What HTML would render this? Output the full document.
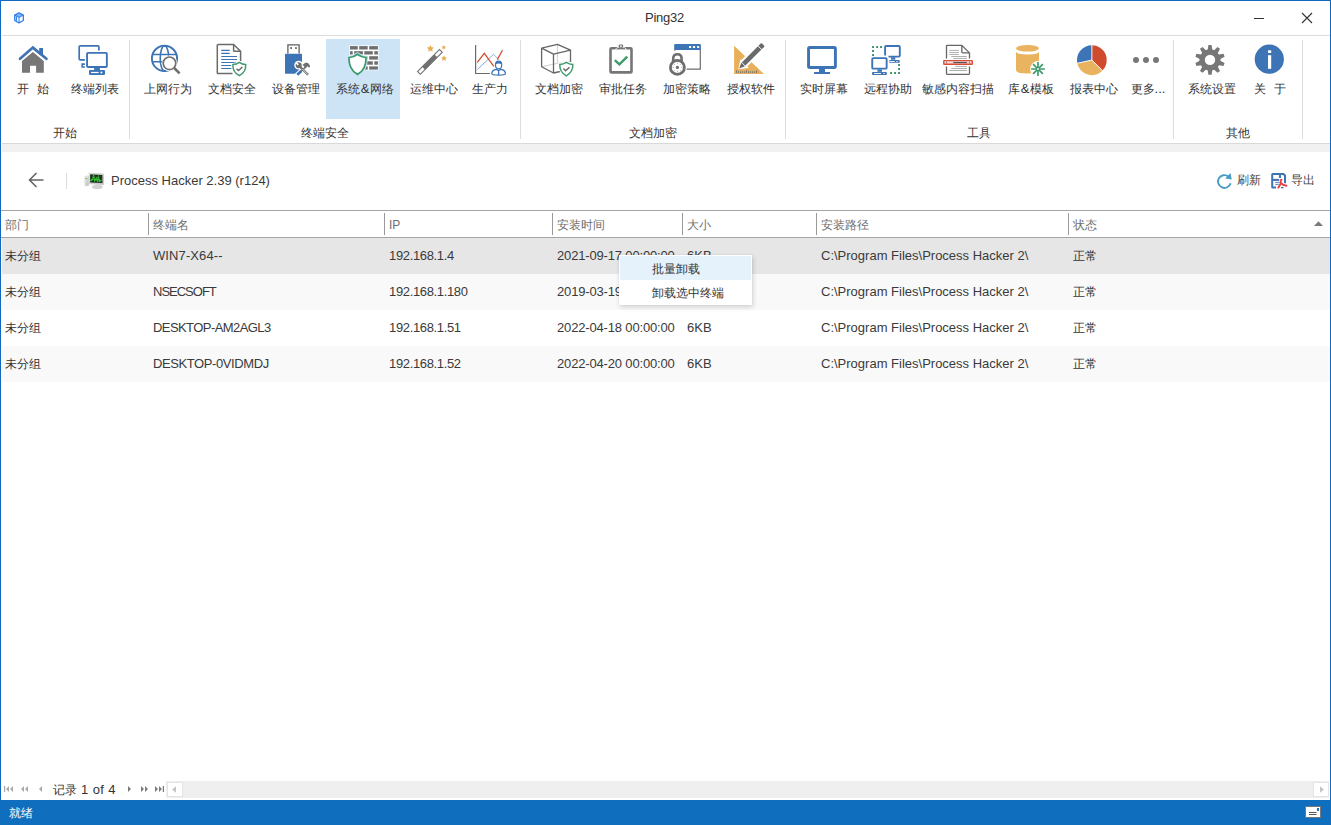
<!DOCTYPE html>
<html><head><meta charset="utf-8">
<style>
*{box-sizing:border-box}
html,body{margin:0;padding:0}
body{width:1331px;height:825px;overflow:hidden;position:relative;background:#fff;font-family:"Liberation Sans",sans-serif;color:#333}
.a{position:absolute}
.t{position:absolute;white-space:pre;line-height:20px;height:20px}
.c{font-size:12px}
.l{font-size:13px}
.bt{position:absolute;top:79px;font-size:12px;line-height:20px;white-space:pre;color:#333;transform:translateX(-50%)}
.gl{position:absolute;top:123px;font-size:12px;line-height:20px;white-space:pre;color:#333;transform:translateX(-50%)}
.vs{position:absolute;width:1px;background:#dedede}
.ic{position:absolute;top:40px;width:40px;height:40px}
.hd{position:absolute;top:215px;font-size:12px;line-height:20px;color:#6e6e6e;white-space:pre}
.hs{position:absolute;top:213px;width:1px;height:22px;background:#9a9a9a}
.row{position:absolute;left:2px;width:1328px;height:36px}
.cell{position:absolute;line-height:36px;height:36px;white-space:pre;color:#3a3a3a;font-size:13px}
.cell.c{font-size:12px;color:#333}
</style></head><body>

<!-- window border -->
<div class="a" style="left:0;top:0;width:1331px;height:1px;background:#1168c0"></div>
<div class="a" style="left:0;top:0;width:1px;height:825px;background:#1168c0"></div>
<div class="a" style="left:1330px;top:0;width:1px;height:825px;background:#1168c0"></div>

<!-- title bar -->
<svg class="a" style="left:11px;top:9px" width="16" height="18" viewBox="0 0 16 18">
 <path d="M8 3.8 L12.3 6.1 L8 8.4 L3.7 6.1 Z" fill="#7fb2f1"/>
 <path d="M8 8.4 V13.9 M3.7 6.1 L8 8.4 L12.3 6.1" fill="none" stroke="#3b86e8" stroke-width="1.1"/>
 <rect x="4.8" y="7.5" width="1.2" height="4.3" fill="#2f7be0"/>
 <path d="M8 3.8 L12.3 6.1 V11.5 L8 13.9 L3.7 11.5 V6.1 Z" fill="none" stroke="#2f80e8" stroke-width="1.3" stroke-linejoin="round"/>
</svg>
<div class="t l" style="left:645px;top:8px;color:#333;letter-spacing:-0.25px">Ping32</div>
<div class="a" style="left:1254px;top:18px;width:10px;height:1px;background:#333"></div>
<svg class="a" style="left:1300px;top:11px" width="14" height="14" viewBox="0 0 14 14">
 <path d="M2 2 L12 12 M12 2 L2 12" stroke="#333" stroke-width="1.1"/>
</svg>
<div class="a" style="left:2px;top:35px;width:1328px;height:1px;background:#dcdcdc"></div>

<!-- ribbon -->
<div class="a" style="left:326px;top:39px;width:74px;height:80px;background:#cde4f7"></div>
<div class="vs" style="left:129px;top:40px;height:99px"></div>
<div class="vs" style="left:520px;top:40px;height:99px"></div>
<div class="vs" style="left:785px;top:40px;height:99px"></div>
<div class="vs" style="left:1173px;top:40px;height:99px"></div>
<div class="vs" style="left:1302px;top:40px;height:99px"></div>

<!-- 1 home -->
<svg class="ic" style="left:14px" viewBox="0 0 40 40">
 <path d="M8 21.1 L18.9 11.9 L29.8 21.1 V32.7 H22.1 V25.7 H16 V32.7 H8 Z" fill="#777"/>
 <path d="M6 18.8 L18.9 7.6 L32.4 18.8" fill="none" stroke="#fff" stroke-width="4.4" stroke-linejoin="miter"/>
 <rect x="25.2" y="8" width="3.8" height="7" fill="#3d74b6"/>
 <path d="M6 18.8 L18.9 7.6 L32.4 18.8" fill="none" stroke="#3d74b6" stroke-width="2.7" stroke-linecap="round"/>
</svg>
<!-- 2 monitors -->
<svg class="ic" style="left:74px" viewBox="0 0 40 40" fill="none" stroke="#3d74b6">
 <path d="M24.9 10.4 V7 Q24.9 5.9 23.8 5.9 H6.3 Q5.2 5.9 5.2 7 V18.7 Q5.2 19.8 6.3 19.8 H10.9" stroke-width="1.7"/>
 <path d="M10.9 24.1 H8.2 V27 H10.9" stroke-width="1.6"/>
 <rect x="13.05" y="12.85" width="19.8" height="14.1" rx="1" stroke-width="1.9"/>
 <rect x="20.1" y="27.9" width="5.8" height="2.4" fill="#3d74b6" stroke="none"/>
 <rect x="15" y="30.1" width="16" height="4.8" rx="0.8" fill="#3d74b6" stroke="none"/>
 <rect x="17" y="31.9" width="7.6" height="1.2" fill="#fff" stroke="none"/>
 <circle cx="27.4" cy="32.5" r="1" fill="#fff" stroke="none"/>
</svg>
<!-- 3 globe -->
<svg class="ic" style="left:147px" viewBox="0 0 40 40" fill="none">
 <circle cx="17.5" cy="18.4" r="12.6" stroke="#3d74b6" stroke-width="1.9"/>
 <ellipse cx="17.5" cy="18.4" rx="4.3" ry="12.6" stroke="#3d74b6" stroke-width="1.6"/>
 <path d="M5.5 14.5 H29.5 M5.5 21.8 H29.5" stroke="#3d74b6" stroke-width="1.6"/>
 <circle cx="22.5" cy="23.3" r="7.9" fill="#fff"/>
 <circle cx="22.5" cy="23.3" r="6.3" fill="#fff" stroke="#707070" stroke-width="1.7"/>
 <path d="M27.2 28 L32.6 33.4" stroke="#707070" stroke-width="2.6"/>
</svg>
<!-- 4 doc shield -->
<svg class="ic" style="left:212px" viewBox="0 0 40 40" fill="none">
 <path d="M20.5 33.5 H6.1 Q5.3 33.5 5.3 32.7 V5.2 Q5.3 4.4 6.1 4.4 H21.6 L28.6 11.2 V21.5 M21.6 4.4 V10.4 Q21.6 11.2 22.4 11.2 H28.6" stroke="#6b6b6b" stroke-width="1.5"/>
 <path d="M9.2 10.4 H17.7 M9.2 13.4 H17.7 M9.2 16.5 H25 M9.2 19.5 H25 M9.2 22.5 H24 M9.2 25.5 H19.5 M9.2 28.5 H19.5" stroke="#3d74b6" stroke-width="1.1"/>
 <path d="M27.3 22.3 Q24.5 24.3 20.9 24.6 Q20.4 32 27.3 35.7 Q34.2 32 33.7 24.6 Q30.1 24.3 27.3 22.3 Z" fill="#fff" stroke="#fff" stroke-width="3"/>
 <path d="M27.3 22.3 Q24.5 24.3 20.9 24.6 Q20.4 32 27.3 35.7 Q34.2 32 33.7 24.6 Q30.1 24.3 27.3 22.3 Z" fill="#fff" stroke="#3e9b6c" stroke-width="1.5"/>
 <path d="M24.5 28.7 L26.5 30.6 L30.4 27" stroke="#666" stroke-width="1.4"/>
</svg>
<!-- 5 usb tools -->
<svg class="ic" style="left:277px" viewBox="0 0 40 40">
 <path d="M10.9 13.5 V4.8 H22.1 V13.5" fill="#fff" stroke="#606060" stroke-width="1.3"/>
 <rect x="13.3" y="7.2" width="1.7" height="1.7" fill="#555"/>
 <rect x="18.1" y="7.2" width="1.7" height="1.7" fill="#555"/>
 <rect x="8" y="13.8" width="17" height="19.9" rx="0.6" fill="#3d74b6"/>
 <g stroke="#fff" stroke-width="4.6" fill="none" stroke-linecap="round"><path d="M22.5 26.2 L31 34.8 M29.5 26.3 L20.2 34.8"/></g>
 <circle cx="21.7" cy="25.2" r="4.4" fill="#fff"/>
 <path d="M25.3 24.6 L28.8 22.3 L31.5 23.3 L33.4 26 L32.3 27.9 L30.5 26.5 L28.2 28.2 Z" fill="#fff" stroke="#fff" stroke-width="2"/>
 <path d="M24.3 31 L20.3 34.8" stroke="#3d74b6" stroke-width="2.6" fill="none"/>
 <path d="M29.3 26.5 L24 31.3" stroke="#6e6e6e" stroke-width="1.6" fill="none"/>
 <path d="M25.6 24.8 L28.8 22.5 L31.3 23.3 L33.2 26 L32.2 27.7 L30.5 26.3 L28.3 28 Z" fill="#6e6e6e"/>
 <circle cx="21.7" cy="25.3" r="3" fill="#6e6e6e"/>
 <path d="M21.3 24.8 L19 22.5" stroke="#fff" stroke-width="1.7"/>
 <path d="M22.5 26.2 L31 34.8" stroke="#6e6e6e" stroke-width="2.3"/>
 <path d="M25.2 28.9 L30.4 34.2" stroke="#fff" stroke-width="0.7"/>
</svg>
<!-- 6 firewall -->
<svg class="ic" style="left:343px" viewBox="0 0 40 40">
 <rect x="6.4" y="5.4" width="29.1" height="24.8" fill="#fff"/>
 <g fill="#6f6f6f">
  <rect x="7" y="6.1" width="7.8" height="3.4"/><rect x="16.2" y="6.1" width="8.5" height="3.4"/><rect x="26.2" y="6.1" width="8.7" height="3.4"/>
  <rect x="7" y="11.2" width="2.7" height="3.3"/><rect x="11.2" y="11.2" width="8.7" height="3.3"/><rect x="21.3" y="11.2" width="8.5" height="3.3"/><rect x="31.3" y="11.2" width="3.6" height="3.3"/>
  <rect x="16.2" y="16.2" width="8.5" height="3.4"/><rect x="26.2" y="16.2" width="8.7" height="3.4"/>
  <rect x="21.3" y="21.3" width="8.5" height="3.4"/><rect x="31.3" y="21.3" width="3.6" height="3.4"/>
  <rect x="16.2" y="26.4" width="8.5" height="3.2"/><rect x="26.2" y="26.4" width="8.7" height="3.2"/>
 </g>
 <path d="M14.5 14.2 Q10.8 17.2 6 17.6 Q5.6 29.5 14.5 34.4 Q23.4 29.5 23 17.6 Q18.2 17.2 14.5 14.2 Z" fill="#fff" stroke="#cde4f7" stroke-width="3.6"/>
 <path d="M14.5 14.2 Q10.8 17.2 6 17.6 Q5.6 29.5 14.5 34.4 Q23.4 29.5 23 17.6 Q18.2 17.2 14.5 14.2 Z" fill="#fff" stroke="#3e9b6c" stroke-width="1.8"/>
</svg>
<!-- 7 wand -->
<svg class="ic" style="left:412px" viewBox="0 0 40 40">
 <g transform="translate(6.6,33.2) rotate(-45)">
  <rect x="0.5" y="-2" width="31" height="4" fill="#fff" stroke="#707070" stroke-width="1.1"/>
  <rect x="7" y="-2" width="17.5" height="4" fill="#707070"/>
 </g>
 <path fill="#e8ad52" d="M18.4 4.9 L19.5 7.3 L22 7.5 L20.1 9.2 L20.7 11.8 L18.4 10.5 L16.1 11.8 L16.7 9.2 L14.8 7.5 L17.3 7.3 Z"/>
 <path fill="#e8ad52" d="M31.8 5 L32.5 6.5 L34.1 6.6 L32.9 7.7 L33.2 9.3 L31.8 8.5 L30.4 9.3 L30.7 7.7 L29.5 6.6 L31.1 6.5 Z"/>
 <path fill="#e8ad52" d="M32 15.2 L32.9 17.2 L35 17.4 L33.4 18.8 L33.9 20.9 L32 19.8 L30.1 20.9 L30.6 18.8 L29 17.4 L31.1 17.2 Z"/>
</svg>
<!-- 8 chart person -->
<svg class="ic" style="left:470px" viewBox="0 0 40 40" fill="none">
 <path d="M5.6 5.1 V33.5 H19.9" stroke="#6a6a6a" stroke-width="1.2"/>
 <path d="M7.3 29.6 L23.5 14.3 L28.6 19.4" stroke="#86aee0" stroke-width="1"/>
 <path d="M7.3 22.3 L14.3 13.3 L23.8 26.4 M27.2 19.6 L32.5 10.2" stroke="#d35130" stroke-width="1.3"/>
 <ellipse cx="28.6" cy="25" rx="4.4" ry="5" fill="#fff"/>
 <path d="M20.5 35.5 Q20.5 30 27 29.3 H30.2 Q36.7 30 36.7 35.5 Z" fill="#fff"/>
 <ellipse cx="28.6" cy="25" rx="3.1" ry="3.8" stroke="#3d74b6" stroke-width="1.2" fill="#fff"/>
 <path d="M25.5 24.3 Q25.5 21.2 28.6 21.2 Q31.7 21.2 31.7 24.3 Q28.6 22.8 25.5 24.3 Z" fill="#3d74b6"/>
 <path d="M21.8 33.6 Q21.8 29.9 26.4 29.3 L28.6 30.8 L30.8 29.3 Q35.4 29.9 35.4 33.6 Q35.4 35.2 28.6 35.2 Q21.8 35.2 21.8 33.6 Z M28.6 30.8 V35.2" stroke="#3d74b6" stroke-width="1.3"/>
</svg>
<!-- 9 cube shield -->
<svg class="ic" style="left:537px" viewBox="0 0 40 40" fill="none">
 <path d="M20.4 4.4 V23.3 L4.6 26.7 M20.4 23.3 L33.5 21.8" stroke="#d0d0d0" stroke-width="1"/>
 <path d="M4.6 8.2 L20.4 4.4 L33.5 10.2 L16.5 14.1 Z M4.6 8.2 V26.7 L16.5 33 V14.1 M33.5 10.2 V22 M16.5 33 L23 31.5" stroke="#666" stroke-width="1.3" stroke-linejoin="round"/>
 <path d="M29.3 22.3 Q26.5 24.2 22.8 24.4 Q22.4 32.2 29.3 35.8 Q36.2 32.2 35.8 24.4 Q32.1 24.2 29.3 22.3 Z" fill="#fff" stroke="#fff" stroke-width="3"/>
 <path d="M29.3 22.3 Q26.5 24.2 22.8 24.4 Q22.4 32.2 29.3 35.8 Q36.2 32.2 35.8 24.4 Q32.1 24.2 29.3 22.3 Z" fill="#fff" stroke="#3e9b6c" stroke-width="1.5"/>
 <path d="M26.4 28.6 L28.6 30.7 L32.5 27.2" stroke="#666" stroke-width="1.4"/>
</svg>
<!-- 10 clipboard -->
<svg class="ic" style="left:601px" viewBox="0 0 40 40" fill="none">
 <rect x="9.5" y="8.2" width="21" height="24.2" rx="1" stroke="#767676" stroke-width="2.6"/>
 <path d="M14 9.8 L16.5 7.3 H23.3 L25.8 9.8 Z" fill="#767676" stroke="#fff" stroke-width="0.8"/>
 <rect x="17.7" y="4.4" width="4.4" height="3.4" rx="1.2" fill="#767676"/>
 <rect x="19" y="5.5" width="1.8" height="1.3" fill="#fff"/>
 <path d="M13.8 20.1 L18.4 24.3 L26.3 16.7" stroke="#3e9b6c" stroke-width="2.5"/>
</svg>
<!-- 11 lock window -->
<svg class="ic" style="left:665px" viewBox="0 0 40 40">
 <path d="M9.8 9.5 V29.1 H35.3 V9.5" fill="#fff" stroke="#6e6e6e" stroke-width="1.2"/>
 <path d="M9.2 10 V5.3 Q9.2 4.1 10.4 4.1 H34.7 Q35.9 4.1 35.9 5.3 V10 Z" fill="#3d74b6"/>
 <rect x="24" y="6.1" width="2.2" height="1.9" fill="#fff"/><rect x="27.9" y="6.1" width="2.2" height="1.9" fill="#fff"/><rect x="32" y="6.1" width="2.2" height="1.9" fill="#fff"/>
 <circle cx="12.4" cy="27.4" r="9.6" fill="#fff"/>
 <path d="M6.3 21 V18.8 Q6.3 12.2 12.4 12.2 Q18.5 12.2 18.5 18.8 V21" fill="#fff" stroke="#fff" stroke-width="4"/>
 <path d="M8.2 21 V18.8 Q8.2 14.2 12.4 14.2 Q16.6 14.2 16.6 18.8 V21" fill="none" stroke="#6e6e6e" stroke-width="2.6"/>
 <circle cx="12.4" cy="27.4" r="7" fill="#fff" stroke="#6e6e6e" stroke-width="2.8"/>
 <circle cx="12.4" cy="27.4" r="1.6" fill="#6e6e6e"/>
 <path d="M12.4 22.5 V23.8 M12.4 31 V32.3 M7.5 27.4 H8.8 M16 27.4 H17.3 M9 24 L9.8 24.8 M15 30 L15.8 30.8 M15.8 24 L15 24.8 M9.8 30 L9 30.8" stroke="#999" stroke-width="0.8"/>
</svg>
<!-- 12 triangle pencil -->
<svg class="ic" style="left:729px" viewBox="0 0 40 40">
 <path d="M5.1 5.8 V34 H35 Z M11.4 19.2 L10 29 L19.9 27.9 Z" fill="#e9b05c" fill-rule="evenodd"/>
 <g fill="#6e6e6e"><rect x="7.2" y="30.1" width="0.9" height="2.9"/><rect x="9.2" y="31.2" width="0.9" height="1.8"/><rect x="11.2" y="31.2" width="0.9" height="1.8"/><rect x="13.2" y="31.2" width="0.9" height="1.8"/><rect x="15.2" y="31.2" width="0.9" height="1.8"/><rect x="17.2" y="30.1" width="0.9" height="2.9"/><rect x="19.2" y="31.2" width="0.9" height="1.8"/><rect x="21.2" y="31.2" width="0.9" height="1.8"/><rect x="23.2" y="31.2" width="0.9" height="1.8"/><rect x="25.2" y="31.2" width="0.9" height="1.8"/><rect x="27.2" y="30.1" width="0.9" height="2.9"/></g>
 <g transform="translate(10,28.6) rotate(-45)">
  <path d="M-1 0 L6 -4.4 H34.5 Q36 -4.4 36 -2.9 V2.9 Q36 4.4 34.5 4.4 H6 Z" fill="#fff"/>
  <path d="M0.3 0 L5.3 -2.4 H33 Q34 -2.4 34 -1.4 V1.4 Q34 2.4 33 2.4 H5.3 Z" fill="#6a6a6a"/>
  <path d="M6.2 -2.6 V2.6 M29.5 -2.6 V2.6" stroke="#fff" stroke-width="0.9"/>
 </g>
</svg>
<!-- 13 monitor -->
<svg class="ic" style="left:802px" viewBox="0 0 40 40">
 <rect x="6.55" y="7.5" width="26.85" height="20.05" rx="1.2" fill="none" stroke="#3d74b6" stroke-width="2.9"/>
 <rect x="17" y="28.5" width="6" height="3.8" fill="#3d74b6"/>
 <rect x="12.1" y="32" width="15.9" height="2" fill="#3d74b6"/>
</svg>
<!-- 14 remote -->
<svg class="ic" style="left:866px" viewBox="0 0 40 40">
 <g fill="#2f8f5e">
  <rect x="6.1" y="6.1" width="1.9" height="1.9"/><rect x="10.2" y="6.1" width="1.9" height="1.9"/><rect x="14.1" y="6.1" width="1.9" height="1.9"/>
  <rect x="6.1" y="10" width="1.9" height="1.9"/><rect x="6.1" y="14.1" width="1.9" height="1.9"/>
  <rect x="24.1" y="32.1" width="1.9" height="1.9"/><rect x="28.1" y="32.1" width="1.9" height="1.9"/><rect x="32.1" y="32.1" width="1.9" height="1.9"/>
  <rect x="32.1" y="24.1" width="1.9" height="1.9"/><rect x="32.1" y="28.1" width="1.9" height="1.9"/>
 </g>
 <g fill="none" stroke="#3d74b6">
  <path d="M19.1 15.5 V7 Q19.1 6 20.1 6 H32.8 Q33.8 6 33.8 7 V15.6 Q33.8 16.6 32.8 16.6 H22.5" stroke-width="1.9"/>
  <rect x="6.25" y="18.15" width="14.4" height="10.5" rx="1" stroke-width="1.9"/>
 </g>
 <g fill="#3d74b6">
  <rect x="25" y="17.3" width="4.3" height="2.4"/>
  <rect x="23.3" y="20.1" width="10.4" height="2.7" rx="0.6"/>
  <rect x="11.4" y="29.4" width="4.6" height="2.4"/>
  <rect x="6.1" y="32" width="14.7" height="2.9" rx="0.6"/>
 </g>
 <rect x="23.5" y="21" width="5.2" height="0.9" fill="#fff"/><circle cx="31" cy="21.4" r="0.7" fill="#fff"/>
 <rect x="8" y="33" width="7" height="0.9" fill="#fff"/><circle cx="18" cy="33.4" r="0.7" fill="#fff"/>
</svg>
<!-- 15 scan doc -->
<svg class="ic" style="left:938px" viewBox="0 0 40 40" fill="none">
 <path d="M8.5 18.4 V6.1 Q8.5 5.3 9.3 5.3 H23.8 L31.5 12.9 V18.4 M23.8 5.3 V12.1 Q23.8 12.9 24.6 12.9 H31.5 M8.5 26.4 V33.6 Q8.5 34.4 9.3 34.4 H30.7 Q31.5 34.4 31.5 33.6 V26.4" stroke="#666" stroke-width="1.3"/>
 <path d="M11.2 10.4 H20.9 M11.2 12.5 H20.9 M11.2 14.5 H20.9 M13.3 16.5 H28.9 M15.3 18.4 H28.9 M17.2 26.4 H28.9 M13.3 28.5 H28.9 M11.2 30.5 H28.9" stroke="#b0b0b0" stroke-width="1"/>
 <rect x="5.8" y="20.6" width="28.5" height="3.7" rx="0.4" fill="#fbd9de" stroke="#d64e35" stroke-width="1.4"/>
 <path d="M15.3 22.5 H28.9" stroke="#555" stroke-width="1.2"/>
 <path d="M8.5 21.7 V23.3 M31.5 21.7 V23.3" stroke="#777" stroke-width="1"/>
</svg>
<!-- 16 database -->
<svg class="ic" style="left:1010px" viewBox="0 0 40 40">
 <path d="M6 11.2 V30 Q6 33.5 17.5 33.5 Q29 33.5 29 30 V11.2 Q29 14.5 17.5 14.5 Q6 14.5 6 11.2 Z" fill="#e9b35f"/>
 <ellipse cx="17.5" cy="8.3" rx="11.5" ry="3.3" fill="#e9b35f"/>
 <circle cx="28" cy="29" r="7.9" fill="#fff"/>
 <path d="M28 22.1 V35.9 M21.1 29 H34.9 M23.1 24.1 L32.9 33.9 M32.9 24.1 L23.1 33.9" stroke="#3f9b6c" stroke-width="1.7"/>
 <circle cx="28" cy="29" r="1.9" fill="#3f9b6c"/><circle cx="28" cy="29" r="0.9" fill="#fff"/>
</svg>
<!-- 17 pie -->
<svg class="ic" style="left:1072px" viewBox="0 0 40 40">
 <path d="M19.9 20.1 V5.2 A14.9 14.9 0 0 1 30.5 30.6 Z" fill="#d04b2e"/>
 <path d="M19.9 20.1 L30.5 30.6 A14.9 14.9 0 0 1 5.3 23.3 Z" fill="#e9b25f"/>
 <path d="M19.9 20.1 L5.3 23.3 A14.9 14.9 0 0 1 19.9 5.2 Z" fill="#3d74b6"/>
 <path d="M19.9 20.1 V4.5 M19.9 20.1 L31 31.2 M19.9 20.1 L4.6 23.4" stroke="#fff" stroke-width="0.9"/>
</svg>
<!-- 18 dots -->
<svg class="ic" style="left:1126px" viewBox="0 0 40 40">
 <circle cx="10" cy="20" r="3" fill="#777"/><circle cx="20" cy="20" r="3" fill="#777"/><circle cx="30" cy="20" r="3" fill="#777"/>
</svg>
<!-- 19 gear -->
<svg class="ic" style="left:1190px" viewBox="0 0 40 40">
 <g transform="translate(20,19.9)" fill="#777">
  <circle r="10.6"/>
  <g id="tooth"><path d="M-1.6 -14.8 H1.6 L2.5 -9 H-2.5 Z"/></g>
  <use href="#tooth" transform="rotate(36)"/><use href="#tooth" transform="rotate(72)"/><use href="#tooth" transform="rotate(108)"/><use href="#tooth" transform="rotate(144)"/><use href="#tooth" transform="rotate(180)"/><use href="#tooth" transform="rotate(216)"/><use href="#tooth" transform="rotate(252)"/><use href="#tooth" transform="rotate(288)"/><use href="#tooth" transform="rotate(324)"/>
  <circle r="5.2" fill="#fff"/>
 </g>
</svg>
<!-- 20 info -->
<svg class="ic" style="left:1249px" viewBox="0 0 40 40">
 <circle cx="20.3" cy="19.2" r="14.6" fill="#3d74b6"/>
 <rect x="19" y="10.3" width="3.2" height="2.7" fill="#fff"/>
 <rect x="19" y="15.2" width="3.2" height="13.6" fill="#fff"/>
</svg>


<div class="bt" style="left:33px">开<span style="display:inline-block;width:8px"></span>始</div>
<div class="bt" style="left:94.5px">终端列表</div>
<div class="bt" style="left:167.5px">上网行为</div>
<div class="bt" style="left:232px">文档安全</div>
<div class="bt" style="left:296px">设备管理</div>
<div class="bt" style="left:365px">系统<span class="l" style="margin:0 1px">&amp;</span>网络</div>
<div class="bt" style="left:434px">运维中心</div>
<div class="bt" style="left:489.5px">生产力</div>
<div class="bt" style="left:559px">文档加密</div>
<div class="bt" style="left:623px">审批任务</div>
<div class="bt" style="left:687px">加密策略</div>
<div class="bt" style="left:751px">授权软件</div>
<div class="bt" style="left:824px">实时屏幕</div>
<div class="bt" style="left:888px">远程协助</div>
<div class="bt" style="left:958px">敏感内容扫描</div>
<div class="bt" style="left:1031px">库<span class="l" style="margin:0 1px">&amp;</span>模板</div>
<div class="bt" style="left:1094px">报表中心</div>
<div class="bt" style="left:1148px">更多<span class="l">...</span></div>
<div class="bt" style="left:1212px">系统设置</div>
<div class="bt" style="left:1270px">关<span style="display:inline-block;width:8px"></span>于</div>

<div class="gl" style="left:65px">开始</div>
<div class="gl" style="left:325px">终端安全</div>
<div class="gl" style="left:653px">文档加密</div>
<div class="gl" style="left:979px">工具</div>
<div class="gl" style="left:1238px">其他</div>

<div class="a" style="left:2px;top:143px;width:1328px;height:1px;background:#d9d9d9"></div>
<div class="a" style="left:2px;top:144px;width:1328px;height:8px;background:#f1f1f1"></div>

<!-- toolbar -->
<svg class="a" style="left:26px;top:170px" width="20" height="20" viewBox="0 0 20 20">
 <path d="M3.5 10 H17.5 M10.5 3 L3.5 10 L10.5 17" fill="none" stroke="#666" stroke-width="1.6"/>
</svg>
<div class="a" style="left:66px;top:173px;width:1px;height:16px;background:#dcdcdc"></div>
<svg class="a" style="left:82px;top:168px" width="24" height="24" viewBox="0 0 24 24">
 <defs><linearGradient id="gb" x1="0" y1="0" x2="1" y2="1"><stop offset="0" stop-color="#f6f6f6"/><stop offset="1" stop-color="#b9b9b9"/></linearGradient></defs>
 <path d="M2.9 8.4 L5.6 7.9 L6.6 8.2 V17.7 L2.9 17.6 Z" fill="url(#gb)" stroke="#c8c8c8" stroke-width="0.5"/>
 <rect x="3.2" y="10" width="2.2" height="1.1" fill="#6fd43c"/>
 <ellipse cx="15.3" cy="18.9" rx="5.4" ry="2.3" fill="#d2d2d2"/>
 <path d="M7.1 5 L21.6 6 V16.5 L7.3 15.8 Z" fill="url(#gb)" stroke="#bdbdbd" stroke-width="0.6"/>
 <path d="M8.1 6.2 L20.4 7 V15 L8.2 14.4 Z" fill="#222a22"/>
 <path d="M8.5 12.6 L10.6 11.4 L11.6 7.8 L12.8 12.4 L14.3 10.2 L15.3 12.6 L16.4 9.2 L17.5 13.4 L19.6 12" fill="none" stroke="#2bcf2b" stroke-width="1.5"/>
 <path d="M8.4 8.5 H20 M8.4 10.6 H20" stroke="#3a443a" stroke-width="0.5"/>
</svg>
<div class="t l" style="left:111px;top:171px;color:#3a3a3a">Process Hacker 2.39 (r124)</div>

<svg class="a" style="left:1214px;top:170px" width="22" height="22" viewBox="0 0 22 22">
 <path d="M16.6 13.2 A6.4 6.4 0 1 1 14.3 6.4" fill="none" stroke="#4a9bc4" stroke-width="1.9"/>
 <path d="M16.5 3.1 L17.7 9.5 L11.2 8.5 Z" fill="#4a9bc4"/>
</svg>
<svg class="a" style="left:1268px;top:170px" width="22" height="22" viewBox="0 0 22 22">
 <path d="M8 17.6 H4.8 Q4.2 17.6 4.2 17 V4.5 Q4.2 3.9 4.8 3.9 H15.4 L17 5.4 V13.2" fill="none" stroke="#3d74b6" stroke-width="2"/>
 <path d="M13 17.6 H15.5" stroke="#3d74b6" stroke-width="1.4"/>
 <path d="M5 9.9 H11.2" stroke="#3d74b6" stroke-width="2"/>
 <rect x="10.9" y="5.1" width="2.2" height="2.8" fill="#3d74b6"/>
 <path d="M7.3 12.4 H11.7 M7.3 14.4 H10.7" stroke="#3d74b6" stroke-width="0.9"/>
 <path d="M13.6 9.6 Q12.4 9.6 12.8 11.4 Q13.3 13 11.8 15.2 L10.4 17.6 M13.3 13.2 Q14.6 15.2 18.4 15.8" fill="none" stroke="#e8403f" stroke-width="1.9" stroke-linecap="round"/>
</svg>
<div class="t c" style="left:1237px;top:170px;color:#444">刷新</div>
<div class="t c" style="left:1291px;top:170px;color:#444">导出</div>

<!-- grid -->
<div class="a" style="left:1px;top:210px;width:1329px;height:1px;background:#a5a5a5"></div>
<div class="a" style="left:1px;top:237px;width:1329px;height:1px;background:#a5a5a5"></div>
<div class="hd" style="left:5px">部门</div>
<div class="hs" style="left:148px"></div><div class="hd" style="left:153px">终端名</div>
<div class="hs" style="left:384px"></div><div class="hd l" style="left:389px">IP</div>
<div class="hs" style="left:552px"></div><div class="hd" style="left:557px">安装时间</div>
<div class="hs" style="left:682px"></div><div class="hd" style="left:687px">大小</div>
<div class="hs" style="left:816px"></div><div class="hd" style="left:821px">安装路径</div>
<div class="hs" style="left:1068px"></div><div class="hd" style="left:1073px">状态</div>
<svg class="a" style="left:1313px;top:220px" width="11" height="7" viewBox="0 0 11 7"><path d="M1 6 L5.5 1.2 L10 6 Z" fill="#7a7a7a"/></svg>

<div class="row" style="top:238px;background:#e6e6e6"></div>
<div class="cell c" style="left:5px;top:238px">未分组</div>
<div class="cell" style="left:153px;top:238px;letter-spacing:0.1px">WIN7-X64--</div>
<div class="cell" style="left:389px;top:238px;letter-spacing:-0.35px">192.168.1.4</div>
<div class="cell" style="left:557px;top:238px;letter-spacing:-0.16px">2021-09-17 00:00:00</div>
<div class="cell" style="left:687px;top:238px">6KB</div>
<div class="cell" style="left:821px;top:238px">C:\Program Files\Process Hacker 2\</div>
<div class="cell c" style="left:1073px;top:238px">正常</div>
<div class="row" style="top:274px;background:#f9f9f9"></div>
<div class="cell c" style="left:5px;top:274px">未分组</div>
<div class="cell" style="left:153px;top:274px;letter-spacing:-1.0px">NSECSOFT</div>
<div class="cell" style="left:389px;top:274px;letter-spacing:-0.35px">192.168.1.180</div>
<div class="cell" style="left:557px;top:274px;letter-spacing:-0.16px">2019-03-19 00:00:00</div>
<div class="cell" style="left:687px;top:274px">6KB</div>
<div class="cell" style="left:821px;top:274px">C:\Program Files\Process Hacker 2\</div>
<div class="cell c" style="left:1073px;top:274px">正常</div>
<div class="row" style="top:310px;background:#ffffff"></div>
<div class="cell c" style="left:5px;top:310px">未分组</div>
<div class="cell" style="left:153px;top:310px;letter-spacing:-0.57px">DESKTOP-AM2AGL3</div>
<div class="cell" style="left:389px;top:310px;letter-spacing:-0.35px">192.168.1.51</div>
<div class="cell" style="left:557px;top:310px;letter-spacing:-0.16px">2022-04-18 00:00:00</div>
<div class="cell" style="left:687px;top:310px">6KB</div>
<div class="cell" style="left:821px;top:310px">C:\Program Files\Process Hacker 2\</div>
<div class="cell c" style="left:1073px;top:310px">正常</div>
<div class="row" style="top:346px;background:#f9f9f9"></div>
<div class="cell c" style="left:5px;top:346px">未分组</div>
<div class="cell" style="left:153px;top:346px;letter-spacing:-0.4px">DESKTOP-0VIDMDJ</div>
<div class="cell" style="left:389px;top:346px;letter-spacing:-0.35px">192.168.1.52</div>
<div class="cell" style="left:557px;top:346px;letter-spacing:-0.16px">2022-04-20 00:00:00</div>
<div class="cell" style="left:687px;top:346px">6KB</div>
<div class="cell" style="left:821px;top:346px">C:\Program Files\Process Hacker 2\</div>
<div class="cell c" style="left:1073px;top:346px">正常</div>

<!-- context menu -->
<div class="a" style="left:619px;top:255px;width:133px;height:50px;background:#fff;box-shadow:1px 2px 5px rgba(0,0,0,0.17), 0 0 1px rgba(0,0,0,0.1)"></div>
<div class="a" style="left:620px;top:256px;width:131px;height:24px;background:#e5f1fb"></div>
<div class="t c" style="left:652px;top:259px;color:#333">批量卸载</div>
<div class="t c" style="left:652px;top:283px;color:#333">卸载选中终端</div>

<!-- pager / scrollbar -->
<svg class="a" style="left:0;top:782px" width="170" height="16" viewBox="0 0 170 16">
 <g fill="#a9a9a9"><rect x="4" y="4" width="1.2" height="6"/><path d="M6 7 L9 4 V10 Z M10 7 L13 4 V10 Z"/>
 <path d="M21 7 L24 4 V10 Z M25 7 L28 4 V10 Z"/><path d="M39 7 L42 4 V10 Z"/></g>
 <g fill="#7a7a7a"><path d="M128 4 L131 7 L128 10 Z"/><path d="M141 4 L144 7 L141 10 Z M145 4 L148 7 L145 10 Z"/>
 <path d="M155 4 L158 7 L155 10 Z M159 4 L162 7 L159 10 Z"/><rect x="162.8" y="4" width="1.2" height="6"/></g>
</svg>
<div class="t" style="left:53px;top:779px;color:#333"><span class="c">记录</span><span class="l" style="letter-spacing:0.4px"> 1 of 4</span></div>
<div class="a" style="left:166px;top:781px;width:1163px;height:17px;background:#efefef"></div>
<div class="a" style="left:167px;top:782px;width:16px;height:15px;background:#fff;border:1px solid #e4e4e4"></div>
<svg class="a" style="left:171px;top:786px" width="6" height="7" viewBox="0 0 6 7"><path d="M1 3.5 L5 0.3 V6.7 Z" fill="#c4c4c4"/></svg>
<div class="a" style="left:1313px;top:782px;width:16px;height:15px;background:#fff;border:1px solid #e4e4e4"></div>
<svg class="a" style="left:1319px;top:786px" width="6" height="7" viewBox="0 0 6 7"><path d="M5 3.5 L1 0.3 V6.7 Z" fill="#c4c4c4"/></svg>

<!-- status bar -->
<div class="a" style="left:0;top:800px;width:1331px;height:25px;background:#106ebe"></div>
<div class="t c" style="left:9px;top:803px;color:#fff">就绪</div>
<svg class="a" style="left:1305px;top:806px" width="16" height="12" viewBox="0 0 16 12">
 <rect x="0.5" y="0.5" width="15" height="11" fill="#fff" stroke="#777"/>
 <rect x="12" y="2" width="2" height="3" fill="#1f6fc0"/>
 <path d="M4 6.5 H11.5 M4 8.5 H11.5" stroke="#555" stroke-width="1"/>
</svg>

</body></html>
